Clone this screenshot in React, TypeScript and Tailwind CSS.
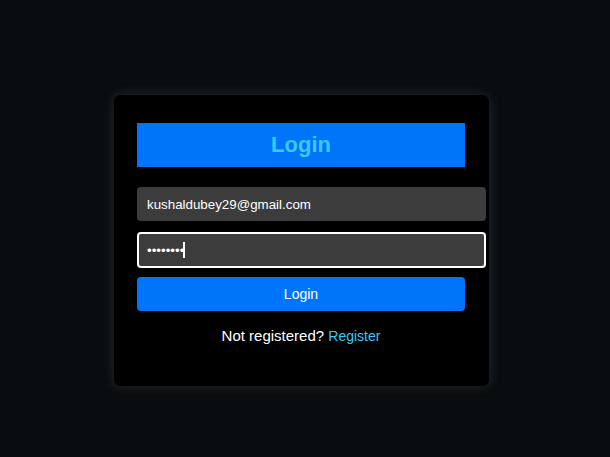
import { useState } from "react";

export default function App() {
  const [email, setEmail] = useState("kushaldubey29@gmail.com");
  const [password, setPassword] = useState("12345678");

  return (
    <div
      className="min-h-screen w-full bg-[#0a0d0f] flex justify-center items-start pt-[95px] pr-[7px]"
      style={{ fontFamily: '"Liberation Sans", Arial, sans-serif' }}
    >
      <form
        className="w-[375px] h-[291px] bg-black rounded-[6px] pt-[28px] pl-[23px] pr-[24px] shadow-[0_0_12px_rgba(120,130,135,0.25)]"
        onSubmit={(e) => e.preventDefault()}
      >
        {/* Header */}
        <div className="w-[328px] h-[44px] bg-[#0075f9] flex items-center justify-center">
          <h1 className="text-[22px] font-bold text-[#3cc8f5] leading-none">Login</h1>
        </div>

        <input
          type="email"
          value={email}
          onChange={(e) => setEmail(e.target.value)}
          className="mt-[20px] block w-[349px] h-[34px] rounded-[4px] bg-[#3c3c3c] px-[10px] text-[13.33px] text-white outline-none"
        />

        {/* Focused password field */}
        <div className="relative mt-[11px] w-[349px]">
          <input
            type="password"
            value={password}
            onChange={(e) => setPassword(e.target.value)}
            className="block w-[349px] h-[36px] rounded-[4px] bg-[#3c3c3c] border-2 border-white px-[8px] text-[13.33px] text-white outline-none caret-white"
          />
          <span className="absolute left-[46px] top-[10px] w-[2px] h-[16px] bg-white pointer-events-none" />
        </div>

        <button
          type="submit"
          className="mt-[9px] block w-[328px] h-[34px] rounded-[4px] bg-[#0075f9] text-white text-[14px]"
        >
          Login
        </button>

        <p className="mt-[17px] text-center text-[15px] text-white leading-none">
          Not registered?{" "}
          <a href="#" className="text-[14px] text-[#3cc8f5]">
            Register
          </a>
        </p>
      </form>
    </div>
  );
}
